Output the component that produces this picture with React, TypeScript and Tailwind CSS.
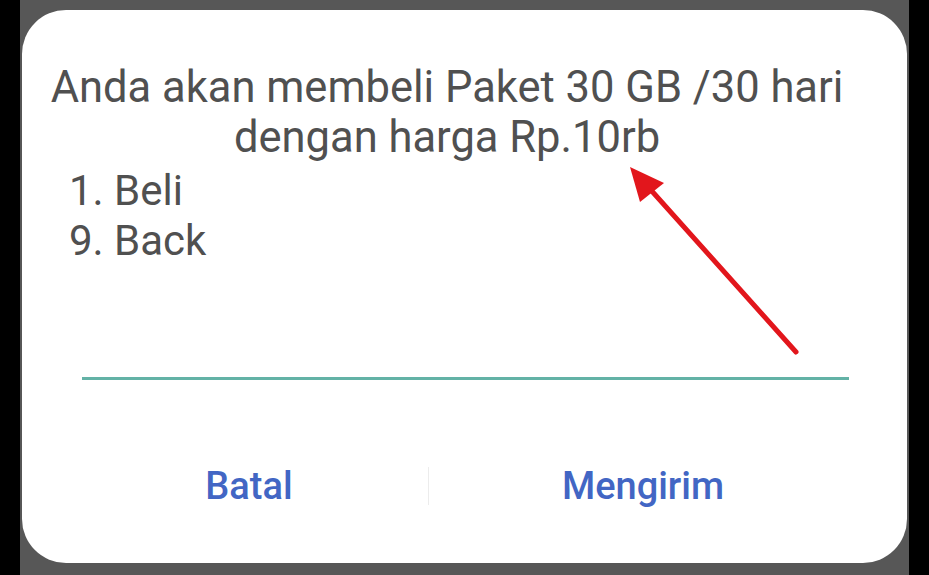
import React from "react";

const font = { fontFamily: "Roboto, 'Noto Sans', 'Liberation Sans', sans-serif" };

function PointerArrow() {
  return (
    <svg
      className="absolute left-0 top-0 pointer-events-none"
      width={929}
      height={575}
      viewBox="0 0 929 575"
    >
      <line x1={796} y1={352} x2={650} y2={189} stroke="#e2161c" strokeWidth={5} strokeLinecap="round" />
      <polygon points="630,167 640,202 664,183" fill="#e2161c" />
    </svg>
  );
}

export default function App() {
  return (
    <div className="relative w-[929px] h-[575px] bg-black px-[20px] overflow-hidden" style={font}>
      <div className="h-full bg-[#575757] pt-[10px] pb-[12px] px-[2px]">
        <div className="h-full bg-white rounded-[44px] flex flex-col">
          <div className="pt-[53px] pl-[22px] pr-[57px] text-center text-[43.5px] leading-[50px] text-[#505050] whitespace-nowrap">
            <p>Anda akan membeli Paket 30 GB /30 hari</p>
            <p>dengan harga Rp.10rb</p>
          </div>
          <div className="mt-[3px] pl-[47px] text-[42px] leading-[50px] text-[#505050]">
            <p>1. Beli</p>
            <p>9. Back</p>
          </div>
          <div className="mt-[111px] ml-[60px] mr-[58px] h-[3px] bg-[#63b2a6]" />
          <div className="mt-[84px] pl-[48px] pr-[50px] flex items-center">
            <button className="w-[358px] text-center text-[38px] leading-[44px] font-medium text-[#4266c4]">
              Batal
            </button>
            <div className="w-px h-[38px] bg-[#ececec]" />
            <button className="flex-1 text-center text-[38px] leading-[44px] font-medium text-[#4266c4]">
              Mengirim
            </button>
          </div>
        </div>
      </div>
      <PointerArrow />
    </div>
  );
}
